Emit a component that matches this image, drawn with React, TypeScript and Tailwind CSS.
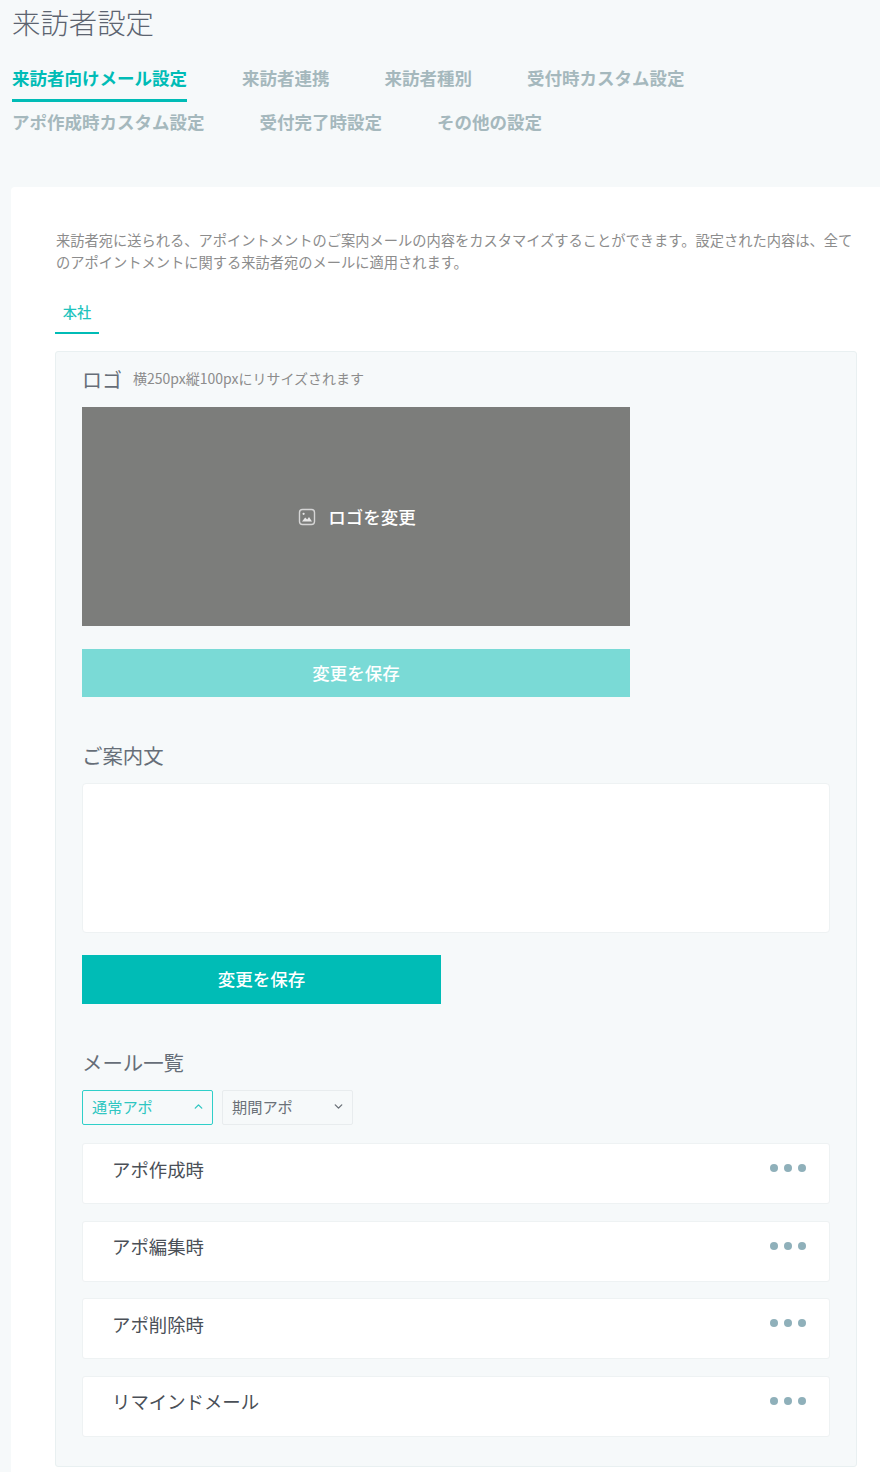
import React from "react"
import { ChevronDown, ChevronUp } from "lucide-react"

const font = { fontFamily: '"Noto Sans CJK JP", "Noto Sans", sans-serif' }

const tabsTop = ["来訪者向けメール設定", "来訪者連携", "来訪者種別", "受付時カスタム設定"]
const tabsBottom = ["アポ作成時カスタム設定", "受付完了時設定", "その他の設定"]
const mails = ["アポ作成時", "アポ編集時", "アポ削除時", "リマインドメール"]

function PictureIcon() {
  return (
    <svg width="18" height="18" viewBox="0 0 18 18" fill="none">
      <rect x="1.5" y="1.5" width="15" height="15" rx="3" stroke="#d5d5d5" strokeWidth="1.4" />
      <circle cx="5.6" cy="5.8" r="1.1" fill="#e8e8e8" />
      <path d="M4 13.5 L7.2 9.5 L9.2 11.5 L11 9 L14 13.5 Z" fill="#e8e8e8" />
    </svg>
  )
}

function MailRow({ label }: { label: string }) {
  return (
    <div className="flex h-[61px] items-start justify-between rounded-[3px] border border-[#eef2f3] bg-white pr-[23px] pl-[29px]">
      <span className="mt-[10.5px] text-[18.4px] leading-[28px] text-[#4a4f57]">{label}</span>
      <div className="mt-[20px] flex gap-[6px]">
        <div className="size-2 rounded-full bg-[#8fb0ba]" />
        <div className="size-2 rounded-full bg-[#8fb0ba]" />
        <div className="size-2 rounded-full bg-[#8fb0ba]" />
      </div>
    </div>
  )
}

export default function App() {
  return (
    <div className="h-[1472px] w-[880px] overflow-hidden bg-[#f6f9fa]" style={font}>
      <h1 className="pt-[2px] pl-3 text-[28.4px] leading-[40px] font-light text-[#5c6470]">来訪者設定</h1>

      <div className="mt-[15px] flex gap-[55px] pl-3">
        {tabsTop.map((t, i) => (
          <div
            key={t}
            className={
              i === 0
                ? "h-[45px] border-b-[3px] border-[#00bcb6] pt-[8px] text-[17.5px] leading-[26px] font-bold text-[#00bcb6]"
                : "h-[45px] pt-[8px] text-[17.5px] leading-[26px] font-bold text-[#a5b8bd]"
            }
          >
            {t}
          </div>
        ))}
      </div>
      <div className="-mt-[1px] flex gap-[55px] pl-3">
        {tabsBottom.map((t) => (
          <div key={t} className="h-[43px] pt-[8px] text-[17.5px] leading-[26px] font-bold text-[#a5b8bd]">
            {t}
          </div>
        ))}
      </div>

      <div className="mt-[43px] ml-[11px] h-[1300px] rounded-tl-[4px] bg-white pt-[42px] pr-[23px] pl-[44px]">
        <p className="pl-[1px] text-[14.25px] leading-[22px] text-[#8c8c8c]">
          来訪者宛に送られる、アポイントメントのご案内メールの内容をカスタマイズすることができます。設定された内容は、全てのアポイントメントに関する来訪者宛のメールに適用されます。
        </p>
        <div className="mt-[18px] flex h-[43px] w-[44px] justify-center border-b-2 border-[#00bcb6] pt-[11px] text-[14.25px] leading-[20px] font-medium text-[#1fc4be]">
          本社
        </div>

        <div className="mt-[17px] h-[1116px] rounded-[3px] border border-[#e9f0f1] bg-[#f6f9fa] px-[26px]">
          <div className="flex h-[55px] items-center">
            <span className="text-[20px] text-[#666e78]">ロゴ</span>
            <span className="ml-[11px] pb-[2px] text-[14px] text-[#8c8c8c]">横250px縦100pxにリサイズされます</span>
          </div>
          <div className="flex h-[219px] w-[548px] items-center justify-center gap-[12px] bg-[#7c7d7b] pl-[2px]">
            <PictureIcon />
            <span className="pt-[2px] text-[17.5px] font-medium text-white">ロゴを変更</span>
          </div>
          <div className="mt-[23px] flex h-[48px] w-[548px] items-center justify-center bg-[#7adad6] text-[17.5px] font-medium text-white">
            変更を保存
          </div>

          <div className="mt-[43px] h-[30px] text-[20.4px] leading-[30px] text-[#666e78]">ご案内文</div>
          <div className="mt-[13px] h-[150px] w-[748px] rounded-[4px] border border-[#eef2f3] bg-white" />
          <div className="mt-[22px] flex h-[49px] w-[359px] items-center justify-center bg-[#00bcb6] text-[17.5px] font-medium text-white">
            変更を保存
          </div>

          <div className="mt-[43px] h-[30px] text-[20.4px] leading-[30px] text-[#666e78]">メール一覧</div>
          <div className="mt-[13px] flex gap-[9px]">
            <div className="flex h-[35px] w-[131px] items-center justify-between rounded-[2px] border border-[#2fcfc9] pr-[7px] pb-[3px] pl-[9px] text-[15.2px] text-[#2fc6c1]">
              通常アポ
              <ChevronUp size={13} strokeWidth={2.5} />
            </div>
            <div className="flex h-[35px] w-[131px] items-center justify-between rounded-[2px] border border-[#e8ecee] pr-[7px] pb-[3px] pl-[9px] text-[15.2px] text-[#6b7178]">
              期間アポ
              <ChevronDown size={13} strokeWidth={2.5} />
            </div>
          </div>
          <div className="mt-[18px] flex w-[748px] flex-col gap-[16.67px]">
            {mails.map((m) => (
              <MailRow key={m} label={m} />
            ))}
          </div>
        </div>
      </div>
    </div>
  )
}
